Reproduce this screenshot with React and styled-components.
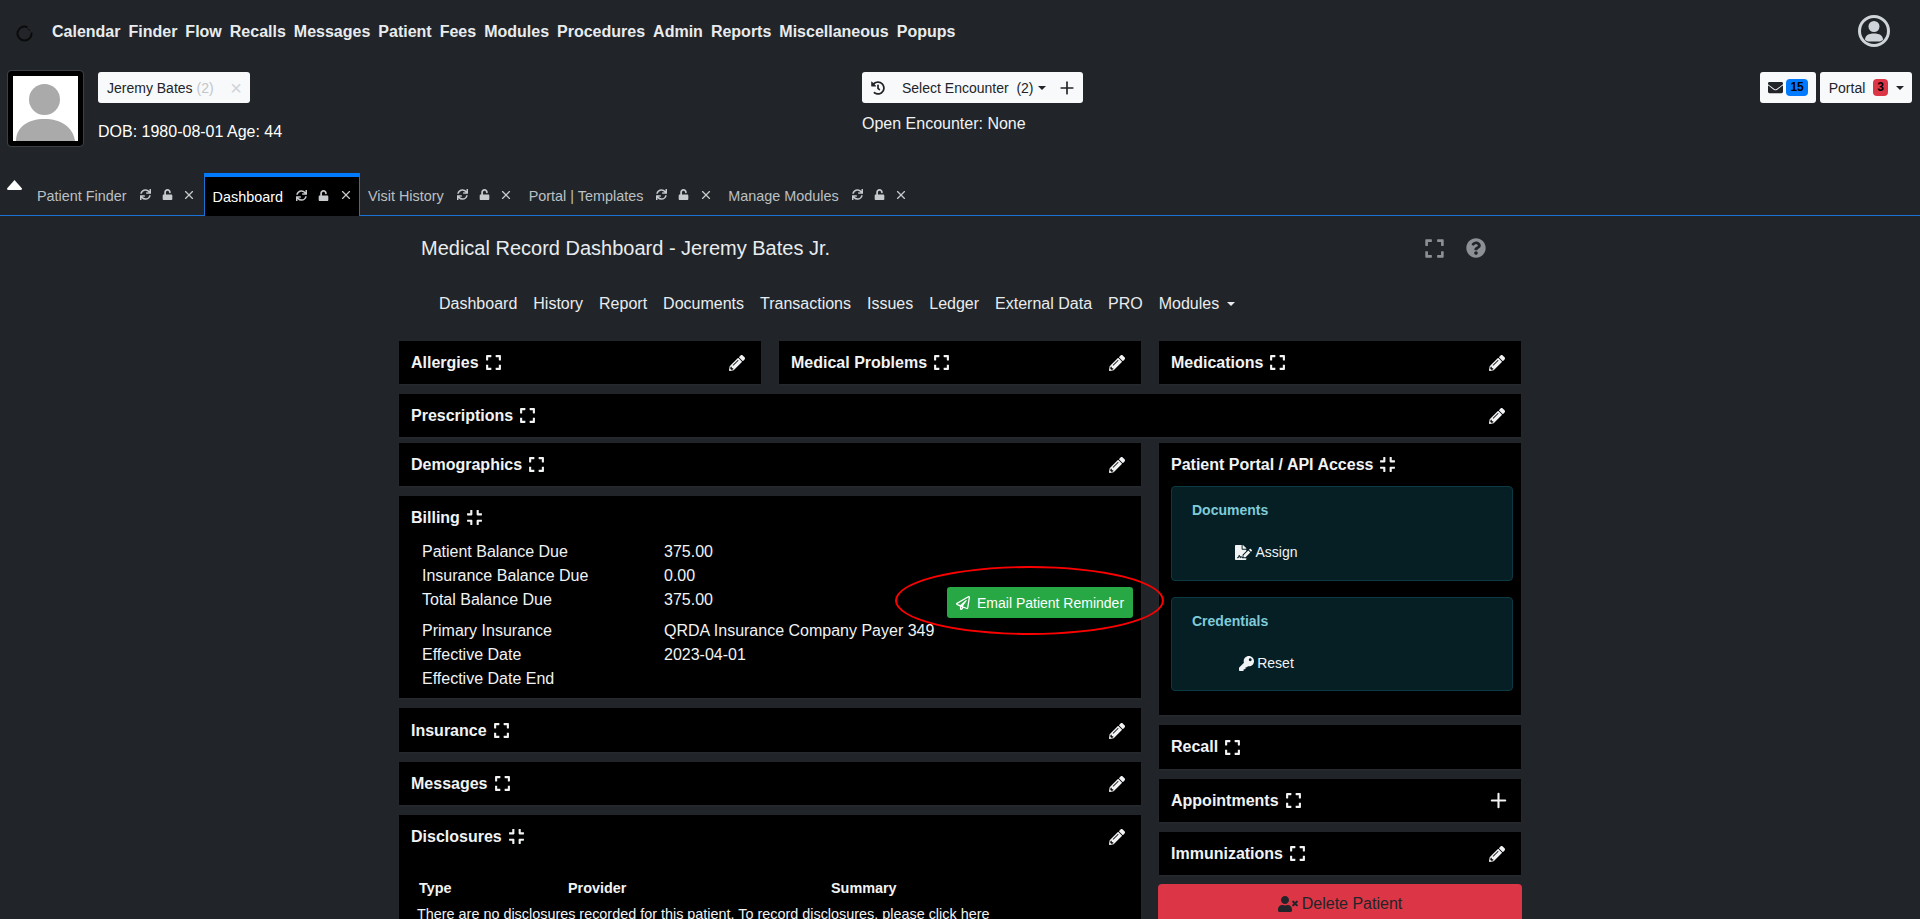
import React from "react";
import styled, { createGlobalStyle } from "styled-components";
import {
  FaSync, FaUnlock, FaPencilAlt, FaHistory, FaEnvelope, FaExpand,
  FaCompress, FaQuestionCircle, FaRegPaperPlane, FaFileSignature, FaKey, FaUserTimes,
} from "react-icons/fa";
import { Plus, X } from "lucide-react";

const GlobalStyle = createGlobalStyle`
  html, body {
    margin: 0;
    height: 919px;
    overflow: hidden;
    background: #212529;
    color: #f1f3f5;
    font-family: "Liberation Sans", Arial, sans-serif;
    font-size: 16px;
  }
`;

const Page = styled.div`
  width: 1920px;
  height: 919px;
  overflow: hidden;
`;

const TopNav = styled.nav`
  display: flex;
  align-items: center;
  height: 62px;
  padding: 0 30px 0 16px;
`;

const Logo = styled.svg`
  width: 17px;
  height: 17px;
  margin: 4px 19px 0 0;
`;

const NavItem = styled.span`
  font-weight: 700;
  font-size: 16px;
  color: #e9ecef;
  margin: 2px 8px 0 0;
`;

const UserIcon = styled.svg`
  width: 32px;
  height: 32px;
  margin-left: auto;
`;

const PatientBar = styled.section`
  display: grid;
  grid-template-columns: 854px 1fr auto;
  height: 111px;
  padding: 9px 8px 0;
  box-sizing: border-box;
`;

const PatientInfo = styled.div`
  display: flex;
  gap: 15px;
`;

const AvatarFrame = styled.div`
  width: 65px;
  height: 65px;
  background: #fff;
  border: 5px solid #000;
  outline: 1px solid #3c4045;
  border-radius: 3px;
  svg { display: block; }
`;

const PatientCol = styled.div`
  padding-top: 1px;
`;

const PatientPill = styled.div`
  display: flex;
  align-items: center;
  width: 152px;
  height: 31px;
  box-sizing: border-box;
  padding: 0 8px 0 9px;
  background: #f8f9fa;
  border-radius: 3px;
  color: #212529;
  font-size: 14px;
`;

const Muted = styled.span`
  color: #c2c6ca;
  margin-left: 4px;
`;

const PillClose = styled.span`
  margin-left: auto;
  color: #ced4da;
  font-size: 20px;
  line-height: 1;
`;

const PatientMeta = styled.div`
  margin-top: 17px;
  line-height: 24px;
  color: #fff;
`;

const EncounterButton = styled.div`
  display: flex;
  align-items: center;
  width: 221px;
  height: 31px;
  box-sizing: border-box;
  padding: 0 9px;
  margin-top: 1px;
  background: #f8f9fa;
  border-radius: 3px;
  color: #212529;
  font-size: 14px;
`;

const EncounterLabel = styled.span`
  margin-left: 17px;
  white-space: pre;
`;

const Caret = styled.span`
  display: inline-block;
  width: 0;
  height: 0;
  margin-left: ${(p) => p.$gap ?? 4}px;
  border-top: 4.5px solid ${(p) => p.$color || "#212529"};
  border-left: 4.5px solid transparent;
  border-right: 4.5px solid transparent;
`;

const EncounterPlus = styled(Plus)`
  margin-left: auto;
  margin-right: -3px;
`;

const OpenEncounter = styled.div`
  margin-top: 9px;
  line-height: 24px;
  color: #f1f3f5;
`;

const RightButtons = styled.div`
  display: flex;
  gap: 4px;
  margin-top: 1px;
`;

const LightButton = styled.div`
  display: flex;
  align-items: center;
  height: 31px;
  box-sizing: border-box;
  padding: 0 ${(p) => p.$right}px 0 ${(p) => p.$left}px;
  background: #f8f9fa;
  border-radius: 3px;
  color: #212529;
  font-size: 14px;
`;

const Badge = styled.span`
  display: inline-block;
  background: ${(p) => p.$bg};
  color: #000;
  font-size: 12px;
  font-weight: 700;
  line-height: 17px;
  padding: 0 ${(p) => p.$pad}px;
  border-radius: 4px;
  margin-left: ${(p) => p.$gap}px;
`;

const TabBar = styled.div`
  display: flex;
  height: 43px;
  box-sizing: border-box;
  padding-left: 7px;
  border-bottom: 1px solid #1a73d4;
`;

const TabToggle = styled.svg`
  width: 15px;
  height: 10px;
  margin: 7px 7px 0 0;
`;

const Tab = styled.div`
  display: flex;
  align-items: center;
  height: ${(p) => (p.$active ? "43px" : "auto")};
  box-sizing: border-box;
  padding: ${(p) => (p.$active ? "0 8px 0 8px" : "4px 9px 0 8px")};
  font-size: 14.4px;
  color: ${(p) => (p.$active ? "#fff" : "#bcc0c4")};
  background: ${(p) => (p.$active ? "#000" : "transparent")};
  border-top: ${(p) => (p.$active ? "4px solid #007bff" : "none")};
  border-left: ${(p) => (p.$active ? "1px solid #1a73d4" : "none")};
  border-right: ${(p) => (p.$active ? "1px solid #1a73d4" : "none")};
`;

const TabTools = styled.span`
  display: flex;
  align-items: center;
  gap: 11px;
  margin-left: 13px;
  margin-top: -3px;
  color: #c8cbce;
  svg { width: 11px; height: 11px; }
`;

const TabClose = styled(X)`
  && {
    width: 14px;
    height: 14px;
    margin: 0 -1.5px;
  }
`;

const Main = styled.main`
  position: relative;
  width: 1122px;
  margin-left: 399px;
`;

const TitleRow = styled.div`
  display: flex;
  align-items: center;
  height: 64px;
  padding: 0 35px 0 22px;
  color: #8d9094;
`;

const Title = styled.h2`
  margin: 0 auto 0 0;
  font-size: 20px;
  font-weight: 400;
  color: #e9ecef;
`;

const HelpIcon = styled(FaQuestionCircle)`
  margin-left: 21px;
`;

const SubNav = styled.div`
  display: flex;
  align-items: center;
  gap: 16px;
  height: 46px;
  box-sizing: border-box;
  padding: 2px 0 0 40px;
  color: #e9ecef;
`;

const SubNavItem = styled.span`
  display: inline-flex;
  align-items: center;
`;

const CardRow = styled.div`
  display: flex;
  gap: 18px;
  margin-top: ${(p) => p.$top}px;
`;

const Stack = styled.div`
  display: flex;
  flex-direction: column;
  gap: 10px;
  width: ${(p) => p.$w}px;
`;

const Card = styled.section`
  background: #000;
  flex: ${(p) => (p.$fill ? 1 : "none")};
  width: ${(p) => (p.$w ? `${p.$w}px` : "auto")};
  box-shadow: 0 1px 2px rgba(255, 255, 255, 0.04);
  padding-bottom: ${(p) => p.$bottom || 0}px;
`;

const CardHead = styled.header`
  display: flex;
  align-items: center;
  box-sizing: border-box;
  height: ${(p) => p.$h || 43}px;
  padding: ${(p) => p.$nudge || 0}px 16px 0 12px;
  font-weight: 700;
  color: #f1f3f5;
`;

const HeadToggle = styled.span`
  display: inline-flex;
  margin-left: 6px;
`;

const HeadAction = styled.span`
  display: inline-flex;
  margin-left: auto;
`;

const HeadPlus = styled(Plus)`
  margin-right: -5px;
`;

const BillingBody = styled.div`
  padding: 1px 8px 7px 23px;
`;

const BillingGroup = styled.div`
  display: flex;
  align-items: flex-end;
  justify-content: space-between;
  margin-top: ${(p) => p.$top || 0}px;
`;

const BillingRow = styled.div`
  display: grid;
  grid-template-columns: 242px auto;
  line-height: 24px;
  color: #f1f3f5;
`;

const ReminderWrap = styled.div`
  position: relative;
  margin-bottom: -6px;
`;

const ReminderButton = styled.div`
  display: flex;
  align-items: center;
  gap: 7px;
  width: 186px;
  height: 31px;
  box-sizing: border-box;
  padding-left: 9px;
  background: #28a745;
  border-radius: 3px;
  color: #fff;
  font-size: 14px;
`;

const AnnotationRing = styled.span`
  position: absolute;
  left: -52px;
  top: -21px;
  width: 269px;
  height: 69px;
  box-sizing: border-box;
  border: 2px solid #f00;
  border-radius: 50%;
  z-index: 2;
  pointer-events: none;
`;

const PortalBox = styled.div`
  height: ${(p) => p.$h}px;
  box-sizing: border-box;
  margin: ${(p) => p.$top}px 8px 0 12px;
  padding: 11px 0 0 20px;
  background: #061f25;
  border: 1px solid #0b3a44;
  border-radius: 4px;
`;

const BoxTitle = styled.div`
  font-size: 14px;
  font-weight: 700;
  line-height: 24px;
  color: #7fcbd9;
`;

const BoxAction = styled.div`
  display: flex;
  align-items: center;
  justify-content: center;
  gap: 3px;
  width: 189px;
  margin-left: -20px;
  margin-top: 18px;
  font-size: 14px;
  line-height: 24px;
  color: #f1f3f5;
`;

const DeleteButton = styled.div`
  display: flex;
  align-items: center;
  justify-content: center;
  gap: 4px;
  width: 364px;
  height: 40px;
  margin: -1px 0 0 -1px;
  background: #dc3545;
  border-radius: 4px;
  color: #212529;
`;

const DiscTable = styled.div`
  padding: 20px 0 0 18px;
  font-size: 14.4px;
`;

const DiscHead = styled.div`
  display: grid;
  grid-template-columns: 149px 263px auto;
  padding-left: 2px;
  font-weight: 700;
  line-height: 21px;
`;

const DiscEmpty = styled.div`
  margin-top: 5px;
  line-height: 21px;
  color: #f1f3f5;
`;

const navItems = ["Calendar", "Finder", "Flow", "Recalls", "Messages", "Patient", "Fees", "Modules", "Procedures", "Admin", "Reports", "Miscellaneous", "Popups"];
const tabs = [
  { label: "Patient Finder" },
  { label: "Dashboard", active: true },
  { label: "Visit History" },
  { label: "Portal | Templates" },
  { label: "Manage Modules" },
];
const subNav = ["Dashboard", "History", "Report", "Documents", "Transactions", "Issues", "Ledger", "External Data", "PRO"];

const Head = ({ title, open, action = "edit", h, nudge }) => (
  <CardHead $h={h} $nudge={nudge}>
    {title}
    <HeadToggle>{open ? <FaCompress size={17} /> : <FaExpand size={17} />}</HeadToggle>
    {action === "edit" && <HeadAction><FaPencilAlt size={16} /></HeadAction>}
    {action === "add" && <HeadAction><HeadPlus size={23} strokeWidth={2.2} /></HeadAction>}
  </CardHead>
);

const App = () => {
  return (
    <Page>
      <GlobalStyle />
      <TopNav>
        <Logo viewBox="0 0 17 17">
          <path d="M11.5 2.2A7 7 0 1 0 15.4 7.500" fill="none" stroke="#0b0b0b" strokeWidth="2" />
          <path d="M11.500 3.500l3 2.500" fill="none" stroke="#0b0b0b" strokeWidth="1" />
        </Logo>
        {navItems.map((n) => <NavItem key={n}>{n}</NavItem>)}
        <UserIcon viewBox="0 0 32 32">
          <circle cx="16" cy="16" r="14.5" fill="none" stroke="#ced4da" strokeWidth="3" />
          <circle cx="16" cy="11.5" r="5.5" fill="#ced4da" />
          <path d="M7 25c0-4.500 3.500-6.500 9-6.500s9 2 9 6.500l-3 1.600H10z" fill="#ced4da" />
        </UserIcon>
      </TopNav>

      <PatientBar>
        <PatientInfo>
          <AvatarFrame>
            <svg width="65" height="65" viewBox="0 0 65 65">
              <ellipse cx="31.500" cy="23.500" rx="15.500" ry="15.500" fill="#aaa" />
              <path d="M3 65C3 51 15 43 31.500 43S60 51 62 65z" fill="#aaa" />
            </svg>
          </AvatarFrame>
          <PatientCol>
            <PatientPill>Jeremy Bates <Muted>(2)</Muted><PillClose>×</PillClose></PatientPill>
            <PatientMeta>DOB: 1980-08-01 Age: 44</PatientMeta>
          </PatientCol>
        </PatientInfo>
        <div>
          <EncounterButton>
            <FaHistory size={14} />
            <EncounterLabel>Select Encounter  (2)</EncounterLabel>
            <Caret />
            <EncounterPlus size={20} strokeWidth={2} />
          </EncounterButton>
          <OpenEncounter>Open Encounter: None</OpenEncounter>
        </div>
        <RightButtons>
          <LightButton $left={8} $right={8}>
            <FaEnvelope size={15} />
            <Badge $bg="#007bff" $pad={4} $gap={3}>15</Badge>
          </LightButton>
          <LightButton $left={9} $right={8}>
            Portal
            <Badge $bg="#dc3545" $pad={4} $gap={8}>3</Badge>
            <Caret $gap={8} />
          </LightButton>
        </RightButtons>
      </PatientBar>

      <TabBar>
        <TabToggle viewBox="0 0 15 10">
          <path d="M7.500 0L15 8.500Q15 10 13.500 10H1.500Q0 10 0 8.500z" fill="#fff" />
        </TabToggle>
        {tabs.map((t) => (
          <Tab key={t.label} $active={t.active}>
            {t.label}
            <TabTools>
              <FaSync />
              <FaUnlock />
              <TabClose strokeWidth={2} />
            </TabTools>
          </Tab>
        ))}
      </TabBar>

      <Main>
        <TitleRow>
          <Title>Medical Record Dashboard - Jeremy Bates Jr.</Title>
          <FaExpand size={21} />
          <HelpIcon size={20} />
        </TitleRow>
        <SubNav>
          {subNav.map((s) => <SubNavItem key={s}>{s}</SubNavItem>)}
          <SubNavItem>Modules<Caret $gap={8} $color="#e9ecef" /></SubNavItem>
        </SubNav>

        <CardRow $top={15}>
          <Card $w={362}><Head title="Allergies" /></Card>
          <Card $w={362}><Head title="Medical Problems" /></Card>
          <Card $w={362}><Head title="Medications" /></Card>
        </CardRow>
        <CardRow $top={10}>
          <Card $fill><Head title="Prescriptions" /></Card>
        </CardRow>
        <CardRow $top={6}>
          <Stack $w={742}>
            <Card><Head title="Demographics" /></Card>
            <Card>
              <Head title="Billing" open action="none" />
              <BillingBody>
                <BillingGroup>
                  <div>
                    <BillingRow><span>Patient Balance Due</span><span>375.00</span></BillingRow>
                    <BillingRow><span>Insurance Balance Due</span><span>0.00</span></BillingRow>
                    <BillingRow><span>Total Balance Due</span><span>375.00</span></BillingRow>
                  </div>
                  <ReminderWrap>
                    <ReminderButton><FaRegPaperPlane size={14} />Email Patient Reminder</ReminderButton>
                    <AnnotationRing />
                  </ReminderWrap>
                </BillingGroup>
                <BillingGroup $top={7}>
                  <div>
                    <BillingRow><span>Primary Insurance</span><span>QRDA Insurance Company Payer 349</span></BillingRow>
                    <BillingRow><span>Effective Date</span><span>2023-04-01</span></BillingRow>
                    <BillingRow><span>Effective Date End</span><span></span></BillingRow>
                  </div>
                </BillingGroup>
              </BillingBody>
            </Card>
            <Card><Head title="Insurance" h={44} nudge={1} /></Card>
            <Card><Head title="Messages" /></Card>
            <Card>
              <Head title="Disclosures" open />
              <DiscTable>
                <DiscHead><span>Type</span><span>Provider</span><span>Summary</span></DiscHead>
                <DiscEmpty>There are no disclosures recorded for this patient. To record disclosures, please click here</DiscEmpty>
              </DiscTable>
            </Card>
          </Stack>
          <Stack $w={362}>
            <Card $bottom={24}>
              <Head title="Patient Portal / API Access" open action="none" />
              <PortalBox $h={95} $top={0}>
                <BoxTitle>Documents</BoxTitle>
                <BoxAction><FaFileSignature size={17} />Assign</BoxAction>
              </PortalBox>
              <PortalBox $h={94} $top={16}>
                <BoxTitle>Credentials</BoxTitle>
                <BoxAction><FaKey size={15} />Reset</BoxAction>
              </PortalBox>
            </Card>
            <Card><Head title="Recall" h={44} action="none" /></Card>
            <Card><Head title="Appointments" action="add" /></Card>
            <Card><Head title="Immunizations" /></Card>
            <DeleteButton><FaUserTimes size={20} />Delete Patient</DeleteButton>
          </Stack>
        </CardRow>
      </Main>
    </Page>
  );
};

export default App;
